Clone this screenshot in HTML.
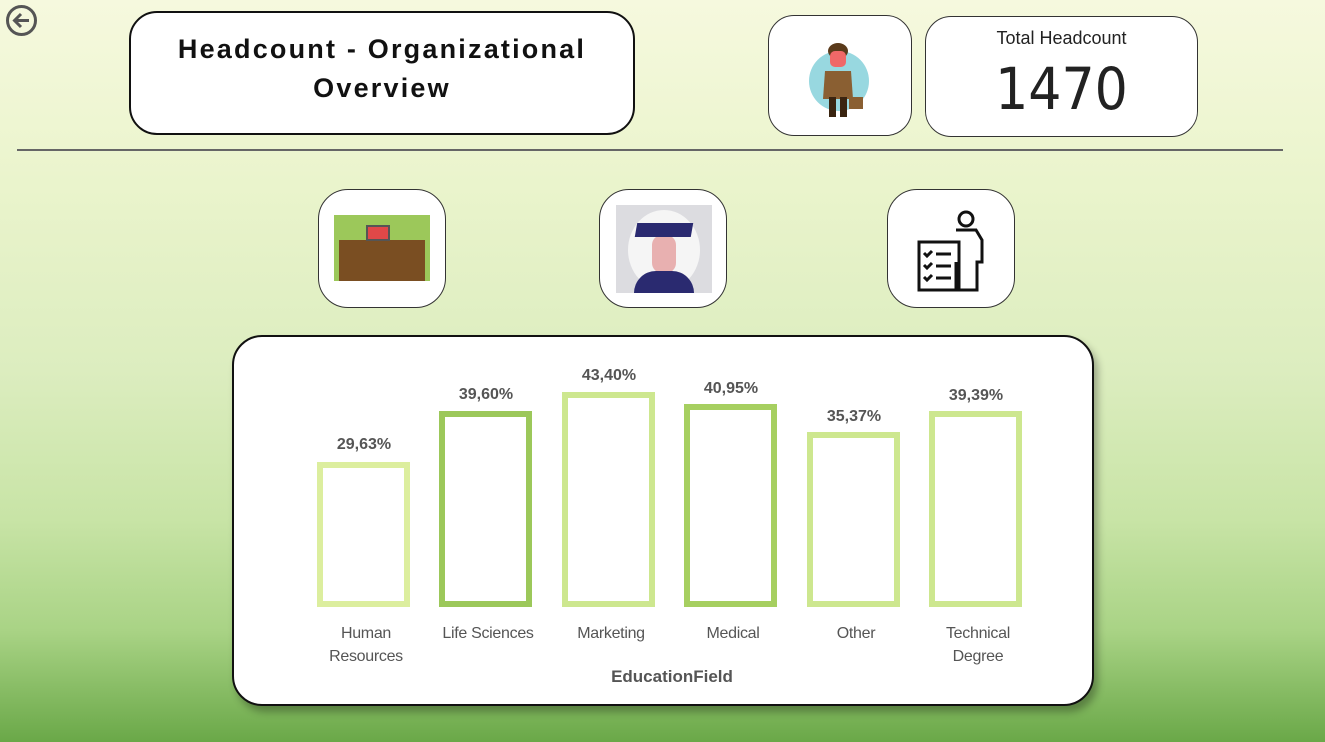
<!DOCTYPE html><html><head><style>
*{margin:0;padding:0;box-sizing:border-box}
body{width:1325px;height:742px;overflow:hidden;position:relative;font-family:"Liberation Sans",sans-serif;
background:linear-gradient(180deg,#f6f9de 0%,#eaf4cc 25%,#dcedbf 50%,#c8e4a6 70%,#a9d385 85%,#6aa848 100%)}
.box{position:absolute;background:#fff;border:1.5px solid #333;border-radius:26px}
.bar{position:absolute;bottom:135px;width:93px;border:6px solid;background:#fff}
.lbl{position:absolute;width:120px;text-align:center;font-size:16px;color:#555;line-height:23px;letter-spacing:-0.3px}
.val{position:absolute;width:120px;text-align:center;font-size:16px;font-weight:bold;color:#555}
</style></head><body>
<svg style="position:absolute;left:5px;top:4px" width="33" height="33" viewBox="0 0 33 33"><circle cx="16.5" cy="16.5" r="14" fill="none" stroke="#555" stroke-width="3"/><path d="M24 16.5H10M16 10l-6.5 6.5L16 23" fill="none" stroke="#555" stroke-width="3"/></svg>
<div class="box" style="left:129px;top:11px;width:506px;height:124px;border:2.5px solid #111;border-radius:28px;text-align:center;font-weight:bold;font-size:27px;line-height:39px;padding-top:17px;color:#111;letter-spacing:2.2px">Headcount - Organizational<br>Overview</div>
<div class="box" style="left:768px;top:15px;width:144px;height:121px">
<svg style="position:absolute;left:20px;top:15px" width="100" height="90" viewBox="0 0 100 90"><circle cx="50" cy="50" r="30" fill="#98d8e0"/><ellipse cx="49" cy="20" rx="10" ry="8" fill="#5a3a1a"/><rect x="41" y="20" width="16" height="16" rx="5" fill="#f06868"/><path d="M36 40h26l2 28H34z" fill="#8a5f32"/><rect x="40" y="66" width="7" height="20" fill="#3a2410"/><rect x="51" y="66" width="7" height="20" fill="#3a2410"/><rect x="60" y="66" width="14" height="12" fill="#8a5f32"/></svg></div>
<div class="box" style="left:925px;top:16px;width:273px;height:121px;text-align:center">
<div style="margin-top:11px;font-size:18px;color:#222">Total Headcount</div>
<div style="margin-top:6px;font-size:58px;color:#222;font-family:'DejaVu Sans Condensed','DejaVu Sans',sans-serif">1470</div></div>
<div style="position:absolute;left:17px;top:149px;width:1266px;height:2px;background:#666"></div>
<div class="box" style="left:318px;top:189px;width:128px;height:119px;border-radius:30px"><div style="position:absolute;left:15px;top:25px;width:96px;height:66px;background:#9cc85a"><div style="position:absolute;left:5px;top:25px;width:86px;height:41px;background:#7a4e22"></div><div style="position:absolute;left:32px;top:10px;width:24px;height:16px;background:#e04848;border:2px solid #555"></div></div></div>
<div class="box" style="left:599px;top:189px;width:128px;height:119px;border-radius:30px"><div style="position:absolute;left:16px;top:15px;width:96px;height:88px;background:#dcdce0"><div style="position:absolute;left:12px;top:5px;width:72px;height:80px;border-radius:50%;background:#f5f5f5"></div><div style="position:absolute;left:36px;top:30px;width:24px;height:38px;border-radius:10px;background:#e8b0b0"></div><div style="position:absolute;left:18px;top:66px;width:60px;height:22px;border-radius:30px 30px 0 0;background:#2a2a70"></div><div style="position:absolute;left:20px;top:18px;width:56px;height:14px;background:#2a2a70;transform:skewX(-10deg)"></div></div></div>
<div class="box" style="left:887px;top:189px;width:128px;height:119px;border-radius:30px"><svg style="position:absolute;left:28px;top:18px" width="70" height="84" viewBox="0 0 70 84" fill="none" stroke="#111" stroke-width="3"><circle cx="50" cy="11" r="7"/><path d="M40 22h20l6 10v22h-5V82H40V54M3 34h40v48H3z"/><path d="M8 45l3 3 5-5M8 57l3 3 5-5M8 69l3 3 5-5M20 46h15M20 58h15M20 70h15"/></svg></div>
<div class="box" style="left:232px;top:335px;width:862px;height:371px;border:2.5px solid #111;border-radius:30px;box-shadow:4px 6px 8px rgba(0,0,0,.3)"></div>
<div class="bar" style="left:317px;height:145px;border-color:#dcee9e"></div>
<div class="bar" style="left:439px;height:196px;border-color:#9cc85a"></div>
<div class="bar" style="left:562px;height:215px;border-color:#cde78f"></div>
<div class="bar" style="left:684px;height:203px;border-color:#a6cf60"></div>
<div class="bar" style="left:807px;height:175px;border-color:#cde78f"></div>
<div class="bar" style="left:929px;height:196px;border-color:#cde78f"></div>
<div class="val" style="left:304px;top:436px">29,63%</div>
<div class="val" style="left:426px;top:386px">39,60%</div>
<div class="val" style="left:549px;top:367px">43,40%</div>
<div class="val" style="left:671px;top:380px">40,95%</div>
<div class="val" style="left:794px;top:408px">35,37%</div>
<div class="val" style="left:916px;top:387px">39,39%</div>
<div class="lbl" style="left:306px;top:622px">Human<br>Resources</div>
<div class="lbl" style="left:428px;top:622px">Life Sciences</div>
<div class="lbl" style="left:551px;top:622px">Marketing</div>
<div class="lbl" style="left:673px;top:622px">Medical</div>
<div class="lbl" style="left:796px;top:622px">Other</div>
<div class="lbl" style="left:918px;top:622px">Technical<br>Degree</div>
<div style="position:absolute;left:552px;top:667px;width:240px;text-align:center;font-weight:bold;font-size:17px;color:#555">EducationField</div>
</body></html>
